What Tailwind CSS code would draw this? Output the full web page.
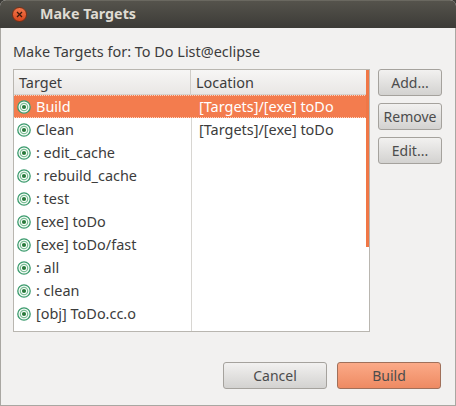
<!DOCTYPE html>
<html><head><meta charset="utf-8"><script src="https://cdn.jsdelivr.net/npm/@tailwindcss/browser@4"></script></head>
<body class="m-0 w-[456px] h-[406px] overflow-hidden bg-[#3c3b37]">
<div class="w-[456px] h-[406px] flex flex-col font-['Noto_Sans',sans-serif] text-[14.45px] text-[#3c3c3c] rounded-t-[6px] overflow-hidden bg-[#f2f1f0]">
  <div class="h-[28px] shrink-0 flex items-center pl-[12px] bg-gradient-to-b from-[#55534c] to-[#3c3b37] border-t border-[#6a6860]">
    <div class="w-[15px] h-[15px] rounded-full bg-gradient-to-b from-[#f2764a] to-[#d9461c] border border-[#7a2f14] flex items-center justify-center shrink-0">
      <svg width="7" height="7" viewBox="0 0 7 7"><path d="M1 1L6 6M6 1L1 6" stroke="#3c1a0c" stroke-width="1.3"/></svg>
    </div>
    <span class="ml-[13px] font-bold text-[#dfdbd2] text-[14.3px] leading-none">Make Targets</span>
  </div>
  <div class="flex-1 flex flex-col border-l border-r border-b border-[#a9a7a2] pl-[12px] pr-[14px] min-h-0">
    <div class="h-[41px] shrink-0 pt-[14px] leading-[20px]">Make Targets for: To Do List@eclipse</div>
    <div class="flex gap-[8px]">
      <div class="relative w-[357px] h-[263px] border border-[#b9b6b0] bg-white shrink-0 flex flex-col overflow-hidden">
        <div class="h-[25px] shrink-0 flex bg-gradient-to-b from-[#f7f6f5] to-[#e9e7e5] border-b border-[#d5d2ce]">
          <div class="w-[177px] pl-[5px] border-r border-[#d0cdc8] leading-[25px]">Target</div>
          <div class="pl-[5px] leading-[25px]">Location</div>
        </div>
        <div class="flex-1 flex flex-col relative">
          <div class="absolute top-0 bottom-0 left-[177px] w-px bg-[#d8d6d2]"></div>
          <div class="h-[23px] flex bg-[#f37c4e] text-white border-y border-dotted border-[#fbd3c0] relative leading-[21px]">
            <div class="w-[177px] flex items-center pl-[3px] gap-[5px]"><svg width="14" height="14" viewBox="0 0 14 14"><circle cx="7" cy="7" r="6.2" fill="#f4faf6" stroke="#3a9a6c" stroke-width="1.3"/><circle cx="7" cy="7" r="3.7" fill="#fff" stroke="#7cc096" stroke-width="1.2"/><circle cx="7" cy="7" r="2.1" fill="#2a7a3c"/></svg>Build</div>
            <div class="pl-[8px]">[Targets]/[exe] toDo</div>
          </div>
          <div class="h-[23px] flex relative leading-[23px]">
            <div class="w-[177px] flex items-center pl-[3px] gap-[5px]"><svg width="14" height="14" viewBox="0 0 14 14"><circle cx="7" cy="7" r="6.2" fill="#f4faf6" stroke="#3a9a6c" stroke-width="1.3"/><circle cx="7" cy="7" r="3.7" fill="#fff" stroke="#7cc096" stroke-width="1.2"/><circle cx="7" cy="7" r="2.1" fill="#2a7a3c"/></svg>Clean</div>
            <div class="pl-[8px]">[Targets]/[exe] toDo</div>
          </div>
          <div class="h-[23px] flex items-center pl-[3px] gap-[5px]"><svg width="14" height="14" viewBox="0 0 14 14"><circle cx="7" cy="7" r="6.2" fill="#f4faf6" stroke="#3a9a6c" stroke-width="1.3"/><circle cx="7" cy="7" r="3.7" fill="#fff" stroke="#7cc096" stroke-width="1.2"/><circle cx="7" cy="7" r="2.1" fill="#2a7a3c"/></svg>: edit_cache</div>
          <div class="h-[23px] flex items-center pl-[3px] gap-[5px]"><svg width="14" height="14" viewBox="0 0 14 14"><circle cx="7" cy="7" r="6.2" fill="#f4faf6" stroke="#3a9a6c" stroke-width="1.3"/><circle cx="7" cy="7" r="3.7" fill="#fff" stroke="#7cc096" stroke-width="1.2"/><circle cx="7" cy="7" r="2.1" fill="#2a7a3c"/></svg>: rebuild_cache</div>
          <div class="h-[23px] flex items-center pl-[3px] gap-[5px]"><svg width="14" height="14" viewBox="0 0 14 14"><circle cx="7" cy="7" r="6.2" fill="#f4faf6" stroke="#3a9a6c" stroke-width="1.3"/><circle cx="7" cy="7" r="3.7" fill="#fff" stroke="#7cc096" stroke-width="1.2"/><circle cx="7" cy="7" r="2.1" fill="#2a7a3c"/></svg>: test</div>
          <div class="h-[23px] flex items-center pl-[3px] gap-[5px]"><svg width="14" height="14" viewBox="0 0 14 14"><circle cx="7" cy="7" r="6.2" fill="#f4faf6" stroke="#3a9a6c" stroke-width="1.3"/><circle cx="7" cy="7" r="3.7" fill="#fff" stroke="#7cc096" stroke-width="1.2"/><circle cx="7" cy="7" r="2.1" fill="#2a7a3c"/></svg>[exe] toDo</div>
          <div class="h-[23px] flex items-center pl-[3px] gap-[5px]"><svg width="14" height="14" viewBox="0 0 14 14"><circle cx="7" cy="7" r="6.2" fill="#f4faf6" stroke="#3a9a6c" stroke-width="1.3"/><circle cx="7" cy="7" r="3.7" fill="#fff" stroke="#7cc096" stroke-width="1.2"/><circle cx="7" cy="7" r="2.1" fill="#2a7a3c"/></svg>[exe] toDo/fast</div>
          <div class="h-[23px] flex items-center pl-[3px] gap-[5px]"><svg width="14" height="14" viewBox="0 0 14 14"><circle cx="7" cy="7" r="6.2" fill="#f4faf6" stroke="#3a9a6c" stroke-width="1.3"/><circle cx="7" cy="7" r="3.7" fill="#fff" stroke="#7cc096" stroke-width="1.2"/><circle cx="7" cy="7" r="2.1" fill="#2a7a3c"/></svg>: all</div>
          <div class="h-[23px] flex items-center pl-[3px] gap-[5px]"><svg width="14" height="14" viewBox="0 0 14 14"><circle cx="7" cy="7" r="6.2" fill="#f4faf6" stroke="#3a9a6c" stroke-width="1.3"/><circle cx="7" cy="7" r="3.7" fill="#fff" stroke="#7cc096" stroke-width="1.2"/><circle cx="7" cy="7" r="2.1" fill="#2a7a3c"/></svg>: clean</div>
          <div class="h-[23px] flex items-center pl-[3px] gap-[5px]"><svg width="14" height="14" viewBox="0 0 14 14"><circle cx="7" cy="7" r="6.2" fill="#f4faf6" stroke="#3a9a6c" stroke-width="1.3"/><circle cx="7" cy="7" r="3.7" fill="#fff" stroke="#7cc096" stroke-width="1.2"/><circle cx="7" cy="7" r="2.1" fill="#2a7a3c"/></svg>[obj] ToDo.cc.o</div>
        </div>
        <div class="absolute right-0 top-0 h-[177px] w-[3px] bg-[#f07746]"></div>
      </div>
      <div class="flex flex-col gap-[7px] w-[64px] shrink-0 text-[14px]">
        <button class="h-[27px] rounded-[3px] border border-[#a5a29d] bg-gradient-to-b from-[#f2f1f0] to-[#d3d2d0] text-[#4c4c4c]">Add...</button>
        <button class="h-[27px] rounded-[3px] border border-[#a5a29d] bg-gradient-to-b from-[#f2f1f0] to-[#d3d2d0] text-[#4c4c4c]">Remove</button>
        <button class="h-[27px] rounded-[3px] border border-[#a5a29d] bg-gradient-to-b from-[#f2f1f0] to-[#d3d2d0] text-[#4c4c4c]">Edit...</button>
      </div>
    </div>
    <div class="flex justify-end gap-[10px] mt-[30px] text-[14px]">
      <button class="w-[104px] h-[27px] rounded-[3px] border border-[#a5a29d] bg-gradient-to-b from-[#f2f1f0] to-[#d3d2d0] text-[#4c4c4c]">Cancel</button>
      <button class="w-[104px] h-[27px] rounded-[3px] border border-[#a0705a] bg-gradient-to-b from-[#fbaa88] to-[#ee8a62] text-[#4c4c4c]">Build</button>
    </div>
  </div>
</div>
</body></html>
